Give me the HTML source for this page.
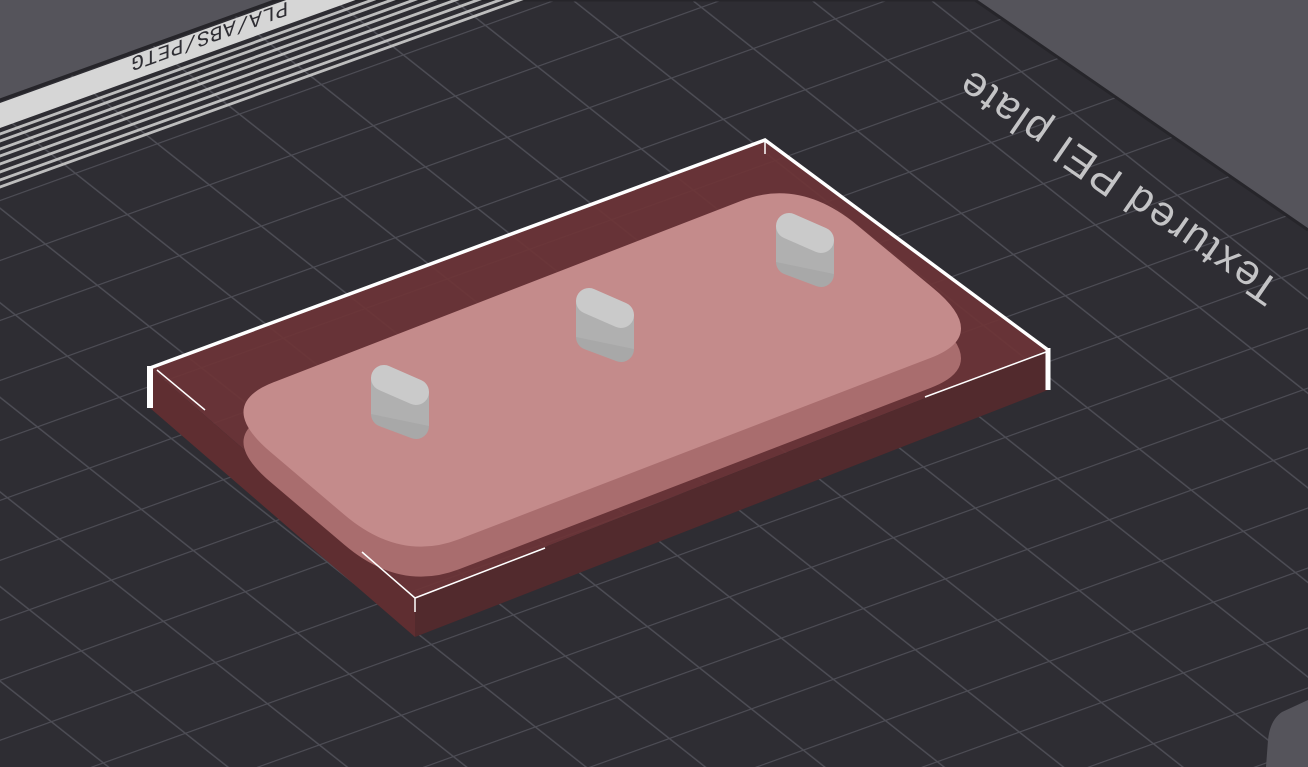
<!DOCTYPE html>
<html><head><meta charset="utf-8"><style>
html,body{margin:0;padding:0;width:1308px;height:767px;overflow:hidden;background:#55545b}
svg{display:block}
</style></head><body>
<svg width="1308" height="767" viewBox="0 0 1308 767" xmlns="http://www.w3.org/2000/svg">
<defs>
<pattern id="grid" patternUnits="userSpaceOnUse" width="40" height="40" patternTransform="matrix(2.05,-0.74,1.3,1.03,0,20)">
<rect width="40" height="40" fill="#2e2d33"/>
<path d="M0 0.4H40M0.4 0V40" stroke="#4d4d55" stroke-width="0.8" fill="none"/>
</pattern>
<clipPath id="plateclip"><path d="M0 100L277 0H975L1308 230V767H0Z"/></clipPath>
</defs>
<rect width="1308" height="767" fill="#55545b"/>
<path d="M0 100L277 0H975L1308 230V767H0Z" fill="url(#grid)"/>
<path d="M0 100L277 0H975L1308 230" fill="none" stroke="#26252a" stroke-width="3"/>
<path d="M1308 700L1282 712Q1270 720 1268 740L1266 767H1308Z" fill="#55545b"/>
<g clip-path="url(#plateclip)">
<g transform="matrix(1,-0.36,0,1,0,0)">
<rect x="-10" y="103" width="900" height="25" fill="#d6d6d6"/>
<g stroke="#bdbdbd" stroke-width="3">
<line x1="-10" y1="134" x2="900" y2="134"/>
<line x1="-10" y1="141" x2="900" y2="141"/>
<line x1="-10" y1="149" x2="900" y2="149"/>
<line x1="-10" y1="156" x2="900" y2="156"/>
<line x1="-10" y1="164" x2="900" y2="164"/>
<line x1="-10" y1="172" x2="900" y2="172"/>
<line x1="-10" y1="180" x2="900" y2="180"/>
<line x1="-10" y1="187" x2="900" y2="187"/>
</g>
<text x="288" y="105" transform="rotate(180 288 105)" font-family="Liberation Mono, monospace" font-size="21" fill="#2e2d33" letter-spacing="0.5">PLA/ABS/PETG</text>
</g>
<text x="970" y="68" transform="rotate(214.6 970 68)" text-anchor="end" font-family="Liberation Sans, sans-serif" font-size="42" fill="#c4c4c6" letter-spacing="2">Textured PEI plate</text>
</g>
<!-- box -->
<polygon points="150,368 765,140 1048,350 415,598" fill="#6c3437" fill-opacity="0.92"/>
<polygon points="150,368 415,598 415,637 150,408" fill="#5f2e31"/>
<polygon points="415,598 1048,350 1048,390 415,637" fill="#522a2d"/>
<!-- pink plate -->
<path d="M273.5,412.3 L741.5,230.7 Q800,208 857,255 L933,318 Q990,365 931,387.7 L459,569.3 Q400,592 344.5,544.9 L270.5,482 Q215,435 273.5,412.3 Z" fill="#a96d6e"/>
<path d="M273.5,382.3 L741.5,200.7 Q800,178 857,225 L933,288 Q990,335 931,357.7 L459,539.3 Q400,562 344.5,514.9 L270.5,452 Q215,405 273.5,382.3 Z" fill="#c48b8b"/>
<!-- pegs -->
<g stroke-linecap="round">
<g>
<line x1="384" y1="414" x2="416" y2="426" stroke="#a8a8a8" stroke-width="26"/>
<polygon points="371,378 429,392 429,426 371,414" fill="#b0b0b0"/>
<line x1="384" y1="378" x2="416" y2="392" stroke="#cacaca" stroke-width="26"/>
</g>
<g transform="translate(205,-77)">
<line x1="384" y1="414" x2="416" y2="426" stroke="#a8a8a8" stroke-width="26"/>
<polygon points="371,378 429,392 429,426 371,414" fill="#b0b0b0"/>
<line x1="384" y1="378" x2="416" y2="392" stroke="#cacaca" stroke-width="26"/>
</g>
<g transform="translate(405,-152)">
<line x1="384" y1="414" x2="416" y2="426" stroke="#a8a8a8" stroke-width="26"/>
<polygon points="371,378 429,392 429,426 371,414" fill="#b0b0b0"/>
<line x1="384" y1="378" x2="416" y2="392" stroke="#cacaca" stroke-width="26"/>
</g>
</g>
<!-- white bounding marks -->
<g stroke="#ffffff" fill="none">
<path d="M150 368L765 140L1048 350" stroke-width="3.5"/>
<path d="M150 366V408" stroke-width="6"/>
<path d="M1048 348V390" stroke-width="5"/>
<path d="M157 370L205 410" stroke-width="1.5"/>
<path d="M765 142V154" stroke-width="1.5"/>
<path d="M1046 352L925 397" stroke-width="1.5"/>
<path d="M415 598L362 552M415 598L545 548M415 598V612" stroke-width="1.5"/>
</g>
</svg>
</body></html>
